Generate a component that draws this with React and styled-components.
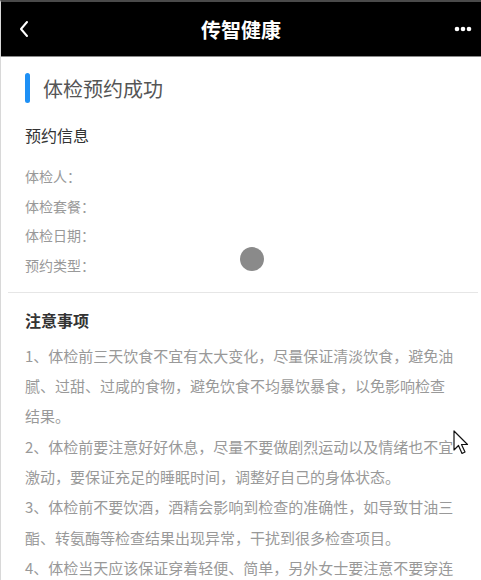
import React from "react";
import styled, { createGlobalStyle } from "styled-components";

const Global = createGlobalStyle`
  html, body { margin: 0; padding: 0; background: #fff; overflow: hidden; }
  body { font-family: "Noto Sans CJK SC", "Noto Sans", sans-serif; }
  * { box-sizing: border-box; }
`;

const Page = styled.div`
  position: relative;
  width: 481px;
  height: 580px;
  overflow: hidden;
  border-top: 2px solid #4a4a4a;
  border-left: 1px solid #d8d8d8;
  background: #fff;
`;

const Header = styled.header`
  height: 55px;
  background: #000;
  border-bottom: 1px solid #8a8a8a;
  display: grid;
  grid-template-columns: 60px 1fr 60px;
  align-items: center;
`;

const HeaderTitle = styled.h1`
  margin: 0;
  text-align: center;
  color: #fff;
  font-size: 20px;
  font-weight: 700;
  letter-spacing: 0px;
`;

const IconSlot = styled.div`
  display: flex;
  align-items: center;
  justify-content: ${(p) => (p.$end ? "flex-end" : "flex-start")};
  padding: ${(p) => (p.$end ? "0 9px 0 0" : "0 0 0 17px")};
`;

const Content = styled.main`
  padding: 16px 0 0;
`;

const TitleRow = styled.div`
  display: flex;
  align-items: center;
  gap: 13px;
  height: 30px;
  padding: 0 24px;
`;

const Bar = styled.span`
  width: 5px;
  height: 30px;
  border-radius: 3px;
  background: #1e90f5;
`;

const Title = styled.h2`
  margin: 0;
  font-size: 20px;
  font-weight: 400;
  color: #555;
`;

const Section = styled.section`
  padding: 0 24px;
  margin-top: ${(p) => p.$top}px;
`;

const SectionHead = styled.h3`
  margin: 0;
  font-size: 16px;
  line-height: 30px;
  font-weight: ${(p) => (p.$bold ? 700 : 400)};
  color: #333;
`;

const FieldList = styled.div`
  margin-top: 12px;
  display: flex;
  flex-direction: column;
`;

const Field = styled.div`
  font-size: 14px;
  line-height: 29.7px;
  color: #999;
`;

const Divider = styled.hr`
  margin: 11px 3px 0 7px;
  border: 0;
  border-top: 1px solid #e6e6e6;
`;

const Notes = styled.div`
  margin-top: 6px;
`;

const Note = styled.p`
  margin: 0;
  font-size: 15px;
  line-height: 30.3px;
  color: #999;
`;

const Touch = styled.span`
  position: absolute;
  left: 239px;
  top: 245px;
  width: 24px;
  height: 24px;
  border-radius: 50%;
  background: #8a8a8a;
`;

const Cursor = styled.svg`
  position: absolute;
  left: 452px;
  top: 428px;
`;

const notes = [
  "1、体检前三天饮食不宜有太大变化，尽量保证清淡饮食，避免油腻、过甜、过咸的食物，避免饮食不均暴饮暴食，以免影响检查结果。",
  "2、体检前要注意好好休息，尽量不要做剧烈运动以及情绪也不宜激动，要保证充足的睡眠时间，调整好自己的身体状态。",
  "3、体检前不要饮酒，酒精会影响到检查的准确性，如导致甘油三酯、转氨酶等检查结果出现异常，干扰到很多检查项目。",
  "4、体检当天应该保证穿着轻便、简单，另外女士要注意不要穿连衣裙、连裤袜，不要佩戴首饰等物品。",
];

const fields = ["体检人：", "体检套餐：", "体检日期：", "预约类型："];

export default function App() {
  return (
    <>
      <Global />
      <Page>
        <Header>
          <IconSlot>
            <svg width="12" height="18" viewBox="0 0 12 18">
              <path d="M9 2 L3 9 L9 16" fill="none" stroke="#fff" strokeWidth="2" strokeLinecap="round" strokeLinejoin="round" />
            </svg>
          </IconSlot>
          <HeaderTitle>传智健康</HeaderTitle>
          <IconSlot $end>
            <svg width="18" height="6" viewBox="0 0 18 6">
              <circle cx="3" cy="3" r="2.3" fill="#fff" />
              <circle cx="9" cy="3" r="2.3" fill="#fff" />
              <circle cx="15" cy="3" r="2.3" fill="#fff" />
            </svg>
          </IconSlot>
        </Header>
        <Content>
          <TitleRow>
            <Bar />
            <Title>体检预约成功</Title>
          </TitleRow>
          <Section $top={17}>
            <SectionHead>预约信息</SectionHead>
            <FieldList>
              {fields.map((f) => (
                <Field key={f}>{f}</Field>
              ))}
            </FieldList>
          </Section>
          <Divider />
          <Section $top={12}>
            <SectionHead $bold>注意事项</SectionHead>
            <Notes>
              {notes.map((n) => (
                <Note key={n}>{n}</Note>
              ))}
            </Notes>
          </Section>
        </Content>
        <Touch />
        <Cursor width="16" height="28" viewBox="0 0 16 28">
          <path d="M1 1 L1 20 L5.5 15.5 L9 23.5 L12 22 L8.5 14.5 L14.5 14.5 Z" fill="#fff" stroke="#111" strokeWidth="1.2" strokeLinejoin="round" />
        </Cursor>
      </Page>
    </>
  );
}
